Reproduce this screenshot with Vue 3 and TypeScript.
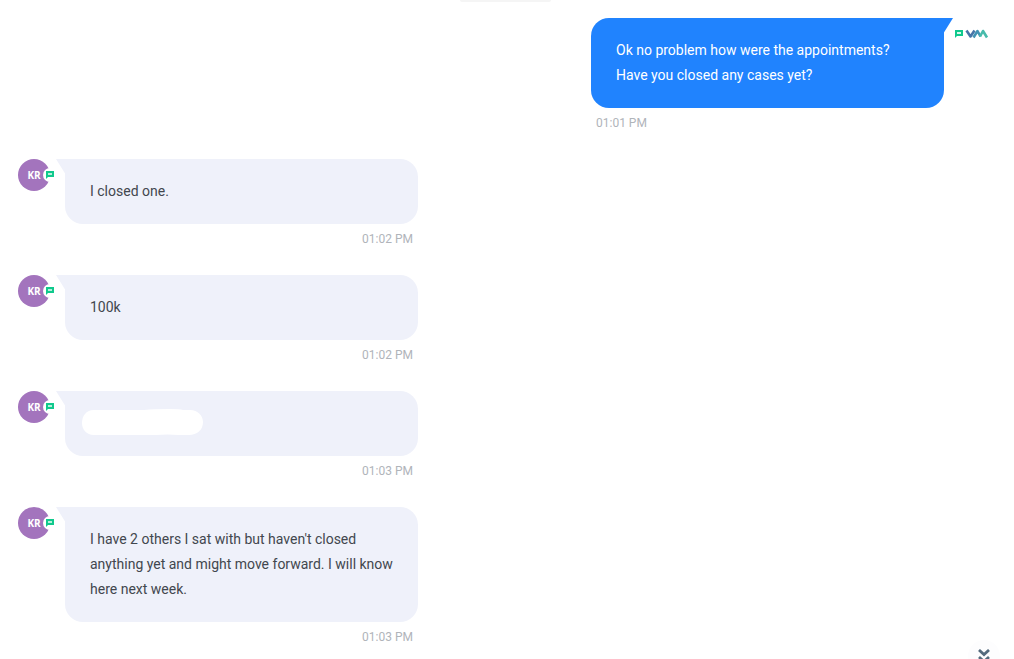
<script setup lang="ts">
interface Message {
  id: number
  own: boolean
  text: string
  time: string
  redacted?: boolean
}

const messages: Message[] = [
  { id: 1, own: true, text: 'Ok no problem how were the appointments? Have you closed any cases yet?', time: '01:01 PM' },
  { id: 2, own: false, text: 'I closed one.', time: '01:02 PM' },
  { id: 3, own: false, text: '100k', time: '01:02 PM' },
  { id: 4, own: false, text: '', time: '01:03 PM', redacted: true },
  { id: 5, own: false, text: "I have 2 others I sat with but haven't closed anything yet and might move forward. I will know here next week.", time: '01:03 PM' },
]
</script>

<template>
  <main class="chat">
    <div class="date-pill"></div>
    <article v-for="m in messages" :key="m.id" class="message" :class="{ own: m.own }">
      <div v-if="!m.own" class="avatar">
        KR
        <span class="badge">
          <svg width="8" height="8" viewBox="0 0 8 8" aria-hidden="true">
            <path d="M0 0H8V6H2L0 8Z" fill="#10c98d" />
            <path d="M2 2H6V4H2Z" fill="#b4efd9" />
          </svg>
        </span>
      </div>
      <div class="body">
        <div class="bubble">
          <svg class="tail" width="10" height="16" viewBox="0 0 10 16" aria-hidden="true">
            <path d="M0 0H10V16Z" />
          </svg>
          <svg v-if="m.redacted" class="blot" width="121" height="27" viewBox="0 0 121 27" aria-hidden="true">
            <path d="M12 1H62Q72 0 88 0Q98 0 101 1H108C116 1 121 7 121 13C121 21 115 26 107 26H96Q86 25 74 26H12C4 26 0 20 0 14C0 7 4 1 12 1Z" fill="#fff" />
          </svg>
          <p class="text">{{ m.text }}</p>
        </div>
        <time class="time">{{ m.time }}</time>
      </div>
      <div v-if="m.own" class="brand">
        <svg width="34" height="10" viewBox="0 0 34 10" aria-hidden="true">
          <path d="M0 1H8V7H2L0 9Z" fill="#10c98d" />
          <path d="M2 3H6V5H2Z" fill="#d8f8ec" />
          <g fill="none" stroke-width="2.6" stroke-linejoin="round">
            <path d="M11.5 1.5L15.5 7.5L19.5 1.5" stroke="#4674a8" />
            <path d="M18.5 8.5L22.5 2L25.5 7.5" stroke="#4293b4" />
            <path d="M25 7.5L28 2L32 8.5" stroke="#48bbab" />
          </g>
        </svg>
      </div>
    </article>
    <button class="jump" type="button" aria-label="Scroll to latest">
      <svg width="12" height="14" viewBox="0 0 12 14" fill="none" stroke="#546a7d" stroke-width="2.8" aria-hidden="true">
        <path d="M1 1L6 5.5L11 1M1 8L6 12.5L11 8" />
      </svg>
    </button>
  </main>
</template>

<style>
body {
  margin: 0;
  background: #fff;
}
</style>

<style scoped>
.chat {
  position: relative;
  box-sizing: border-box;
  height: 100vh;
  overflow: hidden;
  padding: 0 27px 0 18px;
  display: flex;
  flex-direction: column;
  gap: 26px;
  font-family: Roboto, "Liberation Sans", sans-serif;
}
.date-pill {
  align-self: center;
  flex: none;
  width: 91px;
  height: 2px;
  margin: 0 0 -10px 6px;
  border-radius: 0 0 6px 6px;
  background: #f5f5f5;
}
.message {
  display: flex;
  flex: none;
  align-items: flex-start;
  gap: 15px;
}
.message.own {
  justify-content: flex-end;
  gap: 11px;
}
.avatar {
  position: relative;
  flex: none;
  width: 32px;
  height: 32px;
  border-radius: 50%;
  background: #a374bd;
  color: #fff;
  font-family: "Open Sans", sans-serif;
  font-size: 10px;
  font-weight: 700;
  line-height: 32px;
  text-align: center;
}
.badge {
  position: absolute;
  top: 9px;
  right: -7px;
  display: flex;
  align-items: center;
  justify-content: center;
  width: 14px;
  height: 14px;
  border-radius: 50%;
  background: #fff;
}
.brand {
  flex: none;
  display: flex;
  align-items: center;
  width: 32px;
  height: 32px;
}
.brand svg {
  flex: none;
}
.body {
  width: 100%;
  max-width: 353px;
}
.bubble {
  position: relative;
  box-sizing: border-box;
  padding: 20px 25px;
  border-radius: 0 18px 18px 18px;
  background: #eff1fa;
  color: #42474e;
}
.own .bubble {
  border-radius: 18px 0 18px 18px;
  background: #2083fe;
  color: #fff;
}
.tail {
  position: absolute;
  top: 0;
  left: -9px;
  fill: #eff1fa;
}
.own .tail {
  left: auto;
  right: -9px;
  fill: #2083fe;
  transform: scaleX(-1);
}
.blot {
  position: absolute;
  top: 18px;
  left: 17px;
}
.text {
  margin: 0;
  min-height: 25px;
  font-size: 14px;
  line-height: 25px;
}
.time {
  display: block;
  margin-top: 5px;
  padding: 0 5px;
  color: #b0b4ba;
  font-size: 12px;
  line-height: 20px;
  text-align: right;
}
.own .time {
  text-align: left;
}
.jump {
  position: absolute;
  right: 14px;
  bottom: -13px;
  display: flex;
  align-items: center;
  justify-content: center;
  width: 32px;
  height: 32px;
  padding: 0;
  border: 0;
  border-radius: 50%;
  background: #fdfdfe;
}
</style>
